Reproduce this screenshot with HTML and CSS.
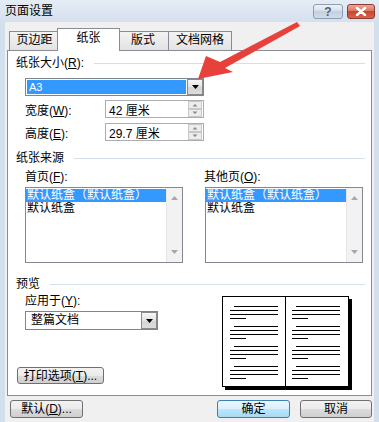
FILE: index.html
```html
<!DOCTYPE html>
<html lang="zh-CN">
<head>
  <meta charset="UTF-8">
  <meta name="viewport" content="width=device-width, initial-scale=1.0">
  <link rel="stylesheet" href="styles.css">
</head>
<body>

  <div class="window">
    <div class="titlebar">
      <span class="title">页面设置</span>
      <div class="caption-btns">
        <span class="cap-btn help">?</span>
        <span class="cap-btn close">
          <svg width="12" height="9" viewBox="0 0 12 9"><path d="M2 1 L10 8 M10 1 L2 8" stroke="#fff" stroke-width="2.4" stroke-linecap="round"/></svg>
        </span>
      </div>
    </div>

    <div class="client">
      <div class="tabs">
        <span class="tab tab-margins">页边距</span>
        <span class="tab tab-paper active">纸张</span>
        <span class="tab tab-layout">版式</span>
        <span class="tab tab-grid">文档网格</span>
      </div>

      <div class="panel">
        <div class="group-head">纸张大小(<u>R</u>):</div>
        <div class="combo combo-size">
          <span class="combo-value selected">A3</span>
          <span class="combo-btn"><svg width="7" height="4" viewBox="0 0 7 4"><path d="M0 0 H7 L3.5 4 Z" fill="#000"/></svg></span>
        </div>

        <div class="spin-row">
          <span class="field-label">宽度(<u>W</u>):</span>
          <div class="spin">
            <span class="spin-value">42 厘米</span>
            <span class="spin-btns">
              <svg width="14" height="16" viewBox="0 0 14 16"><rect x="0.5" y="0.5" width="13" height="7" fill="#ececec" stroke="#c8c8c8"/><rect x="0.5" y="8.5" width="13" height="7" fill="#ececec" stroke="#c8c8c8"/><path d="M4.5 5.5 H9.5 L7 3 Z M4.5 10.5 H9.5 L7 13 Z" fill="#8a8a8a"/></svg>
            </span>
          </div>
        </div>
        <div class="spin-row second">
          <span class="field-label">高度(<u>E</u>):</span>
          <div class="spin">
            <span class="spin-value">29.7 厘米</span>
            <span class="spin-btns">
              <svg width="14" height="16" viewBox="0 0 14 16"><rect x="0.5" y="0.5" width="13" height="7" fill="#ececec" stroke="#c8c8c8"/><rect x="0.5" y="8.5" width="13" height="7" fill="#ececec" stroke="#c8c8c8"/><path d="M4.5 5.5 H9.5 L7 3 Z M4.5 10.5 H9.5 L7 13 Z" fill="#8a8a8a"/></svg>
            </span>
          </div>
        </div>

        <div class="group-head source-head">纸张来源</div>
        <div class="list-labels">
          <span class="list-label">首页(<u>F</u>):</span>
          <span class="list-label">其他页(<u>O</u>):</span>
        </div>
        <div class="list-row">
          <div class="listbox">
            <div class="list-items">
              <div class="list-item selected">默认纸盒（默认纸盒）</div>
              <div class="list-item">默认纸盒</div>
            </div>
            <div class="scrollbar">
              <svg width="7" height="4" viewBox="0 0 7 4"><path d="M0 4 H7 L3.5 0 Z" fill="#a8a8a8"/></svg>
              <svg width="7" height="4" viewBox="0 0 7 4"><path d="M0 0 H7 L3.5 4 Z" fill="#a8a8a8"/></svg>
            </div>
          </div>
          <div class="listbox">
            <div class="list-items">
              <div class="list-item selected">默认纸盒（默认纸盒）</div>
              <div class="list-item">默认纸盒</div>
            </div>
            <div class="scrollbar">
              <svg width="7" height="4" viewBox="0 0 7 4"><path d="M0 4 H7 L3.5 0 Z" fill="#a8a8a8"/></svg>
              <svg width="7" height="4" viewBox="0 0 7 4"><path d="M0 0 H7 L3.5 4 Z" fill="#a8a8a8"/></svg>
            </div>
          </div>
        </div>

        <div class="group-head preview-head">预览</div>
        <div class="preview-row">
          <div class="preview-left">
            <div class="apply-label">应用于(<u>Y</u>):</div>
            <div class="combo combo-apply">
              <span class="combo-value">整篇文档</span>
              <span class="combo-btn"><svg width="7" height="4" viewBox="0 0 7 4"><path d="M0 0 H7 L3.5 4 Z" fill="#000"/></svg></span>
            </div>
            <button class="btn btn-print">打印选项(<u>T</u>)...</button>
          </div>
          <svg class="book" width="131" height="94" viewBox="0 0 131 94">
            <rect x="3" y="3" width="127" height="91" fill="#000"/>
            <rect x="0.5" y="0.5" width="126" height="90" fill="#fff" stroke="#000"/>
            <line x1="63.5" y1="0" x2="63.5" y2="91" stroke="#000"/>
            <g stroke="#000" stroke-width="1.2">
              <path d="M12 10.5 H56 M8 14.5 H56 M8 18.5 H56 M8 22.5 H24"/>
              <path d="M12 30.5 H56 M8 34.5 H56 M8 38.5 H56 M8 42.5 H24"/>
              <path d="M12 50.5 H56 M8 54.5 H56 M8 58.5 H56 M8 62.5 H24"/>
              <path d="M12 70.5 H56 M8 74.5 H56 M8 78.5 H56 M8 82.5 H24"/>
              <path d="M74 10.5 H118 M70 14.5 H118 M70 18.5 H118 M70 22.5 H86"/>
              <path d="M74 30.5 H118 M70 34.5 H118 M70 38.5 H118 M70 42.5 H86"/>
              <path d="M74 50.5 H118 M70 54.5 H118 M70 58.5 H118 M70 62.5 H86"/>
              <path d="M74 70.5 H118 M70 74.5 H118 M70 78.5 H118 M70 82.5 H86"/>
            </g>
          </svg>
        </div>
      </div>

      <div class="footer">
        <button class="btn">默认(<u>D</u>)...</button>
        <span class="footer-space"></span>
        <button class="btn btn-default">确定</button>
        <button class="btn btn-cancel">取消</button>
      </div>
    </div>
  </div>

  <!-- annotation arrow drawn over the dialog -->
  <svg class="arrow" width="379" height="422" viewBox="0 0 379 422">
    <polygon points="198,79 206,56 220,62 297,22 300,26 225,68 233,72" fill="#e8403a"/>
  </svg>

</body>
</html>
```

FILE: styles.css
```css
body {
  margin: 0;
  font-family: 'Liberation Sans', 'Noto Sans CJK SC', sans-serif;
  font-size: 12px;
  color: #000;
  position: relative;
  overflow: hidden;
}

.window {
  width: 379px;
  height: 422px;
  background-color: #d3dfec;
  display: flex;
  flex-direction: column;
}

.titlebar {
  height: 22px;
  flex: none;
  display: flex;
  align-items: center;
  justify-content: space-between;
  padding-left: 5px;
  background: linear-gradient(#e4ecf5, #d6e1ee);
}

.title {
  font-size: 12px;
  line-height: 14px;
}

.caption-btns {
  display: flex;
  gap: 4px;
  margin-right: 4px;
  align-self: flex-start;
  margin-top: 4px;
}

.cap-btn {
  height: 15px;
  box-sizing: border-box;
  border-radius: 3px;
  display: flex;
  align-items: center;
  justify-content: center;
}

.help {
  width: 30px;
  border: 1px solid #8c9db5;
  background: linear-gradient(#eef2f8, #d5deea 50%, #c3d0e0 50%, #d2dde9);
  color: #55606e;
  font-size: 12px;
  font-weight: bold;
  line-height: 12px;
}

.close {
  width: 28px;
  border: 1px solid #8d3a2f;
  background: linear-gradient(#eba897, #d9735f 50%, #c9452f 50%, #d7654d);
}

.client {
  flex: 1;
  margin: 0 5px;
  background-color: #f0f0f0;
  display: flex;
  flex-direction: column;
}

/* tabs */
.tabs {
  height: 28px;
  display: flex;
  align-items: flex-end;
  padding-left: 4px;
  box-sizing: border-box;
}

.tab {
  height: 19px;
  box-sizing: border-box;
  border: 1px solid #898c95;
  border-bottom: none;
  background: linear-gradient(#f3f3f3, #e3e3e3);
  text-align: center;
  line-height: 17px;
  margin-right: -1px;
}

.tab-margins { width: 51px; }
.tab-layout { width: 52px; }
.tab-grid { width: 64px; }

.tab.active {
  width: 63px;
  height: 23px;
  margin-left: -2px;
  margin-right: -3px;
  margin-bottom: -1px;
  background: #fff;
  position: relative;
  z-index: 2;
  line-height: 19px;
}

.panel {
  margin-left: 2px;
  width: 365px;
  height: 346px;
  box-sizing: border-box;
  border: 1px solid #898c95;
  background-color: #fff;
  padding: 5px 0 0 8px;
}

.group-head {
  height: 14px;
  line-height: 14px;
  display: flex;
  align-items: center;
}

.group-head::after {
  content: '';
  flex: 1;
  border-top: 1px solid #d5dfe5;
  margin: 0 6px 0 10px;
}

.source-head { margin-top: 10px; }
.preview-head { margin-top: 14px; }

/* combo boxes */
.combo {
  margin-left: 9px;
  box-sizing: border-box;
  border: 1px solid #7f8590;
  display: flex;
  background: #fff;
}

.combo-size {
  margin-top: 8px;
  width: 179px;
  height: 18px;
}

.combo-value {
  flex: 1;
  margin: 1px;
  padding-left: 2px;
  line-height: 14px;
}

.combo-value.selected {
  background-color: #3399ff;
  color: #fff;
  font-size: 11px;
}

.combo-btn {
  width: 16px;
  box-sizing: border-box;
  border: 1px solid #8a8a8a;
  background: linear-gradient(#f6f6f6, #e4e4e4 50%, #d4d4d4 50%, #dcdcdc);
  display: flex;
  align-items: center;
  justify-content: center;
}

.combo-apply {
  margin-top: 3px;
  width: 133px;
  height: 19px;
}

.combo-apply .combo-value {
  padding-left: 4px;
  line-height: 15px;
  font-size: 12px;
}

/* spinners */
.spin-row {
  margin: 4px 0 0 9px;
  height: 18px;
  display: flex;
  align-items: center;
}

.spin-row.second { margin-top: 5px; }

.field-label { width: 80px; }

.spin {
  width: 99px;
  height: 18px;
  box-sizing: border-box;
  border: 1px solid #abadb3;
  display: flex;
  align-items: center;
}

.spin-value {
  flex: 1;
  padding-left: 3px;
}

.spin-btns {
  display: flex;
  margin-right: 1px;
}

/* paper source lists */
.list-labels {
  margin: 5px 0 0 9px;
  height: 14px;
  line-height: 14px;
  display: flex;
}

.list-label:first-child { width: 179px; }

.list-row {
  margin: 3px 0 0 9px;
  display: flex;
  gap: 22px;
}

.listbox {
  width: 158px;
  height: 76px;
  box-sizing: border-box;
  border: 1px solid #828790;
  display: flex;
}

.list-items {
  flex: 1;
  padding-top: 1px;
}

.list-item {
  height: 13px;
  line-height: 12px;
  padding-left: 1px;
  white-space: nowrap;
  overflow: hidden;
}

.list-item.selected {
  background-color: #3399ff;
  color: #fff;
}

.scrollbar {
  width: 16px;
  background-color: #f2f2f2;
  border-left: 1px solid #e6e6e6;
  display: flex;
  flex-direction: column;
  align-items: center;
  justify-content: space-between;
  padding: 8px 0 8px;
  box-sizing: border-box;
}

/* preview */
.preview-row {
  display: flex;
}

.preview-left {
  width: 206px;
}

.apply-label {
  margin: 3px 0 0 9px;
  height: 14px;
  line-height: 14px;
}

.book {
  margin-top: 5px;
  display: block;
}

/* buttons */
.btn {
  font-family: inherit;
  font-size: 12px;
  height: 18px;
  width: 73px;
  padding: 0;
  box-sizing: border-box;
  border: 1px solid #707070;
  border-radius: 3px;
  background: linear-gradient(#f2f2f2, #ebebeb 50%, #dddddd 50%, #cfcfcf);
  color: #000;
  line-height: 14px;
}

.btn-print {
  display: block;
  width: 87px;
  height: 17px;
  margin: 37px 0 0 1px;
}

.btn-default {
  border-color: #3c7fb1;
  background: linear-gradient(#eaf6fd, #d9f0fc 50%, #bee6fd 50%, #a7d9f5);
}

.btn-cancel {
  width: 72px;
  margin-left: 10px;
}

.footer {
  margin-top: 4px;
  display: flex;
  padding: 0 2px 0 5px;
}

.footer-space { flex: 1; }

.arrow {
  position: absolute;
  top: 0;
  left: 0;
  pointer-events: none;
}
```
